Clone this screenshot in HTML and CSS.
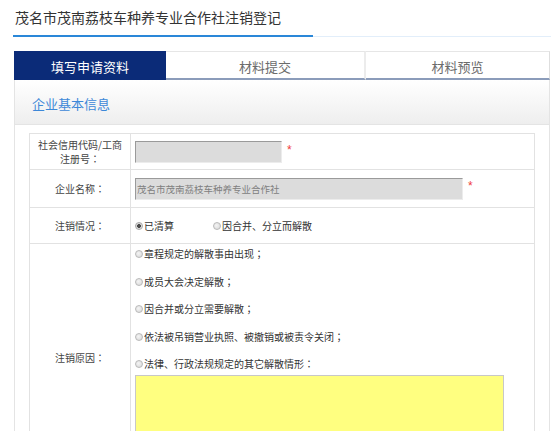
FILE: index.html
```html
<!DOCTYPE html>
<html lang="zh-CN">
<head>
<meta charset="utf-8">
<title>注销登记</title>
<link rel="stylesheet" href="styles.css">
</head>
<body>
<div class="title-bar">
  <h1 class="title">茂名市茂南荔枝车种养专业合作社注销登记</h1>
</div>

<div class="tabs">
  <div class="tab tab-fill active">填写申请资料</div>
  <div class="tab tab-submit">材料提交</div>
  <div class="tab tab-preview">材料预览</div>
</div>

<div class="panel">
  <div class="panel-head">企业基本信息</div>
  <div class="form">
    <div class="label"><span class="label-text">社会信用代码/工商<br>注册号<span class="punct" lang="zh-TW">：</span></span></div>
    <div class="value">
      <input class="field field-short" type="text" readonly value="">
      <span class="req">*</span>
    </div>

    <div class="label"><span class="label-text">企业名称<span class="punct" lang="zh-TW">：</span></span></div>
    <div class="value">
      <input class="field field-long" type="text" readonly value="茂名市茂南荔枝车种养专业合作社">
      <span class="req">*</span>
    </div>

    <div class="label"><span class="label-text">注销情况<span class="punct" lang="zh-TW">：</span></span></div>
    <div class="value">
      <label class="choice choice-inline"><span class="radio checked"></span><span>已清算</span></label>
      <label class="choice choice-inline"><span class="radio"></span><span>因合并、分立而解散</span></label>
    </div>

    <div class="label"><span class="label-text">注销原因<span class="punct" lang="zh-TW">：</span></span></div>
    <div class="value value-stack">
      <label class="choice option"><span class="radio"></span><span>章程规定的解散事由出现<span class="punct" lang="zh-TW">；</span></span></label>
      <label class="choice option"><span class="radio"></span><span>成员大会决定解散<span class="punct" lang="zh-TW">；</span></span></label>
      <label class="choice option"><span class="radio"></span><span>因合并或分立需要解散<span class="punct" lang="zh-TW">；</span></span></label>
      <label class="choice option"><span class="radio"></span><span>依法被吊销营业执照、被撤销或被责令关闭<span class="punct" lang="zh-TW">；</span></span></label>
      <label class="choice option option-last"><span class="radio"></span><span>法律、行政法规规定的其它解散情形<span class="punct" lang="zh-TW">：</span></span></label>
      <textarea class="memo"></textarea>
    </div>
  </div>
</div>
</body>
</html>
```

FILE: styles.css
```css
* {
  box-sizing: border-box;
}

html, body {
  margin: 0;
  padding: 0;
  background: #ffffff;
  overflow: hidden;
}

body {
  width: 554px;
  font-family: "Noto Sans CJK SC", "Noto Sans", "Liberation Sans", sans-serif;
  color: #333333;
}

/* ---------- title ---------- */
.title-bar {
  margin-left: 13px;
  width: 538px;
  border-bottom: 1px solid #e2eefa;
}

.title {
  margin: 0 0 -1px 0;
  width: 300px;
  padding: 7px 0 8px 2px;
  font-size: 14px;
  line-height: 20px;
  font-weight: normal;
  color: #333333;
  white-space: nowrap;
  border-bottom: 2px solid #2a87d8;
}

/* ---------- tabs ---------- */
.tabs {
  display: flex;
  margin: 14px 0 0 14px;
  width: 536px;
  height: 29px;
}

.tab {
  display: flex;
  align-items: center;
  justify-content: center;
  padding-top: 2px;
  font-size: 13px;
  color: #6b6b6b;
  background: #ffffff;
  border-top: 1px solid #e6e6e6;
  border-bottom: 2px solid #8b9cba;
}

.tab-fill {
  width: 152px;
}

.tab-submit {
  width: 200px;
  border-right: 2px solid #ececec;
}

.tab-preview {
  width: 184px;
  border-right: 1px solid #dedede;
}

.tab.active {
  background: #0b2b78;
  color: #ffffff;
  border-top-color: #0b2b78;
  border-bottom-color: #0b2b78;
}

/* ---------- panel ---------- */
.panel {
  margin-left: 14px;
  width: 536px;
  height: 400px;
  border-left: 1px solid #e4e4e4;
  border-right: 1px solid #e4e4e4;
}

.panel-head {
  padding: 15px 0 11px 17px;
  font-size: 13px;
  line-height: 18px;
  color: #3d88d8;
  background: linear-gradient(#ffffff, #eeeeee);
  border-bottom: 1px solid #e4e4e4;
}

/* ---------- form grid ---------- */
.form {
  display: grid;
  grid-template-columns: 101px 1fr;
  grid-template-rows: 36px 38px 36px auto;
  margin: 8px 14px 0 14px;
  width: 506px;
  border-top: 1px solid #e2e2e2;
  border-left: 1px solid #e2e2e2;
}

.label,
.value {
  border-right: 1px solid #e2e2e2;
  border-bottom: 1px solid #e2e2e2;
  font-size: 10px;
  line-height: 14px;
}

.label {
  display: flex;
  align-items: center;
  justify-content: center;
  padding: 0 3px;
  color: #444444;
}

.label-text {
  display: block;
  text-align: center;
}

.punct {
  font-family: "Noto Sans CJK TC", "Noto Sans CJK SC", sans-serif;
}

.value {
  display: flex;
  align-items: center;
  padding-left: 4px;
  color: #333333;
}

.value-stack {
  flex-direction: column;
  align-items: flex-start;
  padding-top: 3px;
  padding-bottom: 10px;
}

.field {
  height: 22px;
  margin: 0;
  padding: 0 0 0 1px;
  font-family: "Noto Sans CJK SC", "Noto Sans", sans-serif;
  font-size: 9.5px;
  color: #808080;
  background: #dcdcdc;
  border: 1px solid;
  border-color: #9a9a9a #ececec #ececec #9a9a9a;
  outline: none;
}

.field-short {
  width: 147px;
}

.field-long {
  width: 328px;
}

.req {
  align-self: flex-start;
  margin: 10px 0 0 5px;
  font-family: "Liberation Sans", sans-serif;
  font-size: 12px;
  line-height: 12px;
  color: #f03c3c;
}

/* ---------- radios ---------- */
.choice {
  display: flex;
  align-items: center;
  white-space: nowrap;
}

.choice-inline {
  margin-right: 39px;
}

.option {
  margin-bottom: 13.5px;
}

.option-last {
  margin-bottom: 4px;
}

.radio {
  display: inline-block;
  flex: none;
  width: 8px;
  height: 8px;
  margin-right: 1px;
  border-radius: 50%;
  border: 1px solid #b9b9b9;
  background: radial-gradient(circle at 40% 40%, #f4f4f4, #d6d6d6);
}

.radio.checked {
  background: radial-gradient(circle, #4a4a4a 0, #4a4a4a 1.6px, #d9d9d9 2.2px, #ececec 100%);
  border-color: #a8a8a8;
}

.memo {
  display: block;
  width: 369px;
  height: 86px;
  margin: 0;
  padding: 2px;
  resize: none;
  background: #ffff80;
  border: 1px solid #c8c8c8;
  outline: none;
}
```
